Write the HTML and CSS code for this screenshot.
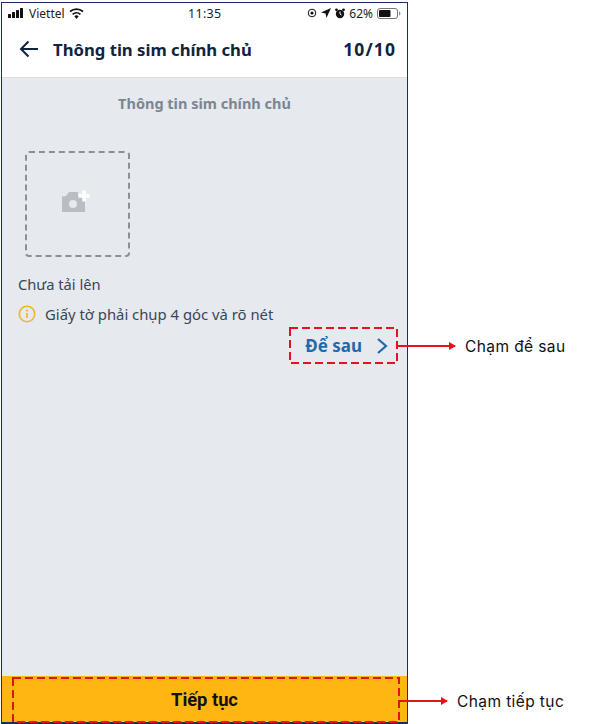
FILE: index.html
```html
<!DOCTYPE html>
<html lang="vi">
<head>
<meta charset="utf-8">
<title>Thông tin sim chính chủ</title>
<link rel="stylesheet" href="styles.css">
</head>
<body>
<div class="canvas">
  <main class="phone">
    <div class="status">
      <div class="status-left">
        <svg class="signal" width="17" height="10" viewBox="0 0 17 10"><rect x="0" y="6" width="3" height="4" rx=".5"/><rect x="4" y="4" width="3" height="6" rx=".5"/><rect x="8" y="2" width="3" height="8" rx=".5"/><rect x="12" y="0" width="3" height="10" rx=".5"/></svg>
        <span>Viettel</span>
        <svg width="15" height="11" viewBox="0 0 15 11"><path d="M7.5 11 5.3 8.3a3.4 3.4 0 0 1 4.4 0Z" fill="#111"/><path d="M3.6 6.3a6 6 0 0 1 7.8 0M1 3.5a10 10 0 0 1 13 0" fill="none" stroke="#111" stroke-width="1.7"/></svg>
      </div>
      <div class="status-time">11:35</div>
      <div class="status-right">
        <svg width="10" height="10" viewBox="0 0 10 10"><circle cx="5" cy="5" r="3.8" fill="none" stroke="#111" stroke-width="1"/><circle cx="5" cy="5" r="1.6" fill="#111"/></svg>
        <svg width="10" height="10" viewBox="0 0 10 10"><path d="M10 0 0 4.6l4.6.8.8 4.6Z" fill="#111"/></svg>
        <svg width="10" height="11" viewBox="0 0 10 11"><circle cx="5" cy="6" r="4.2" fill="#111"/><circle cx="1.5" cy="1.8" r="1.4" fill="#111"/><circle cx="8.5" cy="1.8" r="1.4" fill="#111"/><path d="M5 3.5V6l1.6 1" stroke="#fff" fill="none"/></svg>
        <span>62%</span>
        <svg width="24" height="11" viewBox="0 0 24 11"><rect x=".5" y=".5" width="20" height="10" rx="2.5" fill="none" stroke="#777"/><rect x="2" y="2" width="11.5" height="7" rx="1" fill="#111"/><path d="M22 3.5c1 .3 1.4 1 1.4 2s-.4 1.7-1.4 2Z" fill="#888"/></svg>
      </div>
    </div>
    <header class="topbar">
      <svg class="back" width="20" height="18" viewBox="0 0 20 18"><path d="M19 9H2M9.500 1.500 2 9l7.500 7.500" fill="none" stroke="#10233f" stroke-width="2"/></svg>
      <h1 class="page-title">Thông tin sim chính chủ</h1>
      <div class="step">10/10</div>
    </header>
    <section class="content">
      <h2 class="section-title">Thông tin sim chính chủ</h2>
      <div class="upload">
        <svg class="camera" width="32" height="24" viewBox="0 0 32 24"><path d="M1 7.500 5 7l3-4h9v4l7 .5V23H1Z" fill="#b9bdc4"/><circle cx="12" cy="15" r="4" fill="#e6e9ee"/><path d="M23 1.500v11M17.500 7h11" stroke="#fff" stroke-width="3.400" fill="none"/></svg>
      </div>
      <p class="state">Chưa tải lên</p>
      <p class="hint">
        <svg width="18" height="18" viewBox="0 0 18 18"><circle cx="9" cy="9" r="7.700" fill="none" stroke="#f0b429" stroke-width="1.600"/><path d="M9 8v5" stroke="#f0b429" stroke-width="1.600"/><circle cx="9" cy="5.500" r="1" fill="#f0b429"/></svg>
        <span>Giấy tờ phải chụp 4 góc và rõ nét</span>
      </p>
      <div class="later-row">
        <a class="later">Để sau
          <svg width="12" height="18" viewBox="0 0 12 18"><path d="M2 2l8 7-8 7" fill="none" stroke="#1f69ad" stroke-width="2.200"/></svg>
        </a>
      </div>
    </section>
    <button class="next">Tiếp tục</button>
  </main>
  <svg class="mark mark-later" width="109" height="37" viewBox="0 0 109 37"><rect x="1" y="1" width="107" height="35" fill="none" stroke="#e2131c" stroke-width="2" stroke-dasharray="8 4"/></svg>
  <svg class="mark mark-next" width="388" height="46" viewBox="0 0 388 46"><rect x="1" y="1" width="386" height="44" fill="none" stroke="#e2131c" stroke-width="2" stroke-dasharray="8 4"/></svg>
  <div class="note note-later"><span class="arrow"></span><span class="note-text">Chạm để sau</span></div>
  <div class="note note-next"><span class="arrow"></span><span class="note-text">Chạm tiếp tục</span></div>
</div>
</body>
</html>
```

FILE: styles.css
```css
* { box-sizing: border-box; }
html, body { margin: 0; padding: 0; background: #fff; }
body { font-family: "Noto Sans", "Open Sans", sans-serif; color: #10233f; }
.canvas { position: relative; width: 594px; height: 724px; overflow: hidden; padding: 2px 0 0 1px; }
.phone { width: 407px; height: 722px; border: 1px solid #1b2f5e; border-bottom-width: 2px; display: flex; flex-direction: column; background: #fff; }
.status { height: 20px; display: flex; justify-content: space-between; align-items: center; padding: 0 6px 0 6px; font-size: 12px; color: #222; position: relative; flex: none; }
.status-left, .status-right { display: flex; align-items: center; gap: 4px; }
.status-time { position: absolute; left: 186px; top: 2px; font-size: 12.500px; letter-spacing: .3px; }
.signal { fill: #111; }
.topbar { height: 55px; display: flex; align-items: center; padding: 0 11px 2px 17px; border-bottom: 1px solid #dcdfe3; flex: none; }
.back { flex: none; margin-right: 14px; }
.page-title { margin: 0; font-size: 16.700px; font-weight: 700; flex: 1; }
.step { font-size: 17.500px; font-weight: 700; letter-spacing: 1.1px; }
.content { flex: 1; background: #e6e9ee; padding: 14px 16px 0; display: flex; flex-direction: column; }
.section-title { margin: 0; text-align: center; font-size: 14.500px; font-weight: 700; color: #7b8594; line-height: 22px; }
.upload { width: 105px; height: 106px; margin: 37px 0 0 7px; border: 2px dashed #8c9096; border-radius: 4px; display: flex; align-items: center; justify-content: center; }
.camera { margin-bottom: 7px; margin-right: 2px; }
.state { margin: 17px 0 0; font-size: 14.700px; line-height: 20px; color: #3a4656; }
.hint { margin: 10px 0 0; display: flex; align-items: center; gap: 9px; font-size: 14.850px; line-height: 20px; color: #3a4656; }
.hint svg { flex: none; }
.later-row { display: flex; justify-content: flex-end; margin-top: 10px; padding-right: 3px; }
.later { display: flex; align-items: center; gap: 14px; font-size: 17px; font-weight: 700; color: #1f69ad; line-height: 24px; }
.next { height: 46px; border: 0; background: #ffb612; font-family: "Roboto", sans-serif; font-size: 18.300px; font-weight: 700; color: #111; flex: none; }
.mark { position: absolute; }
.mark-later { left: 289px; top: 327px; }
.mark-next { left: 12px; top: 677px; }
.note { position: absolute; display: flex; align-items: center; font-family: "Inter", sans-serif; font-size: 15.500px; color: #111; }
.note-later { left: 398px; top: 336px; height: 20px; }
.note-next { left: 400px; top: 691px; height: 20px; }
.arrow { display: block; height: 2px; background: #e2131c; position: relative; }
.arrow::after { content: ""; position: absolute; right: -1px; top: -3px; border-left: 7px solid #e2131c; border-top: 4px solid transparent; border-bottom: 4px solid transparent; }
.note-later .arrow { width: 57px; }
.note-next .arrow { width: 47px; }
.note-text { margin-left: 10px; letter-spacing: .4px; }
```
